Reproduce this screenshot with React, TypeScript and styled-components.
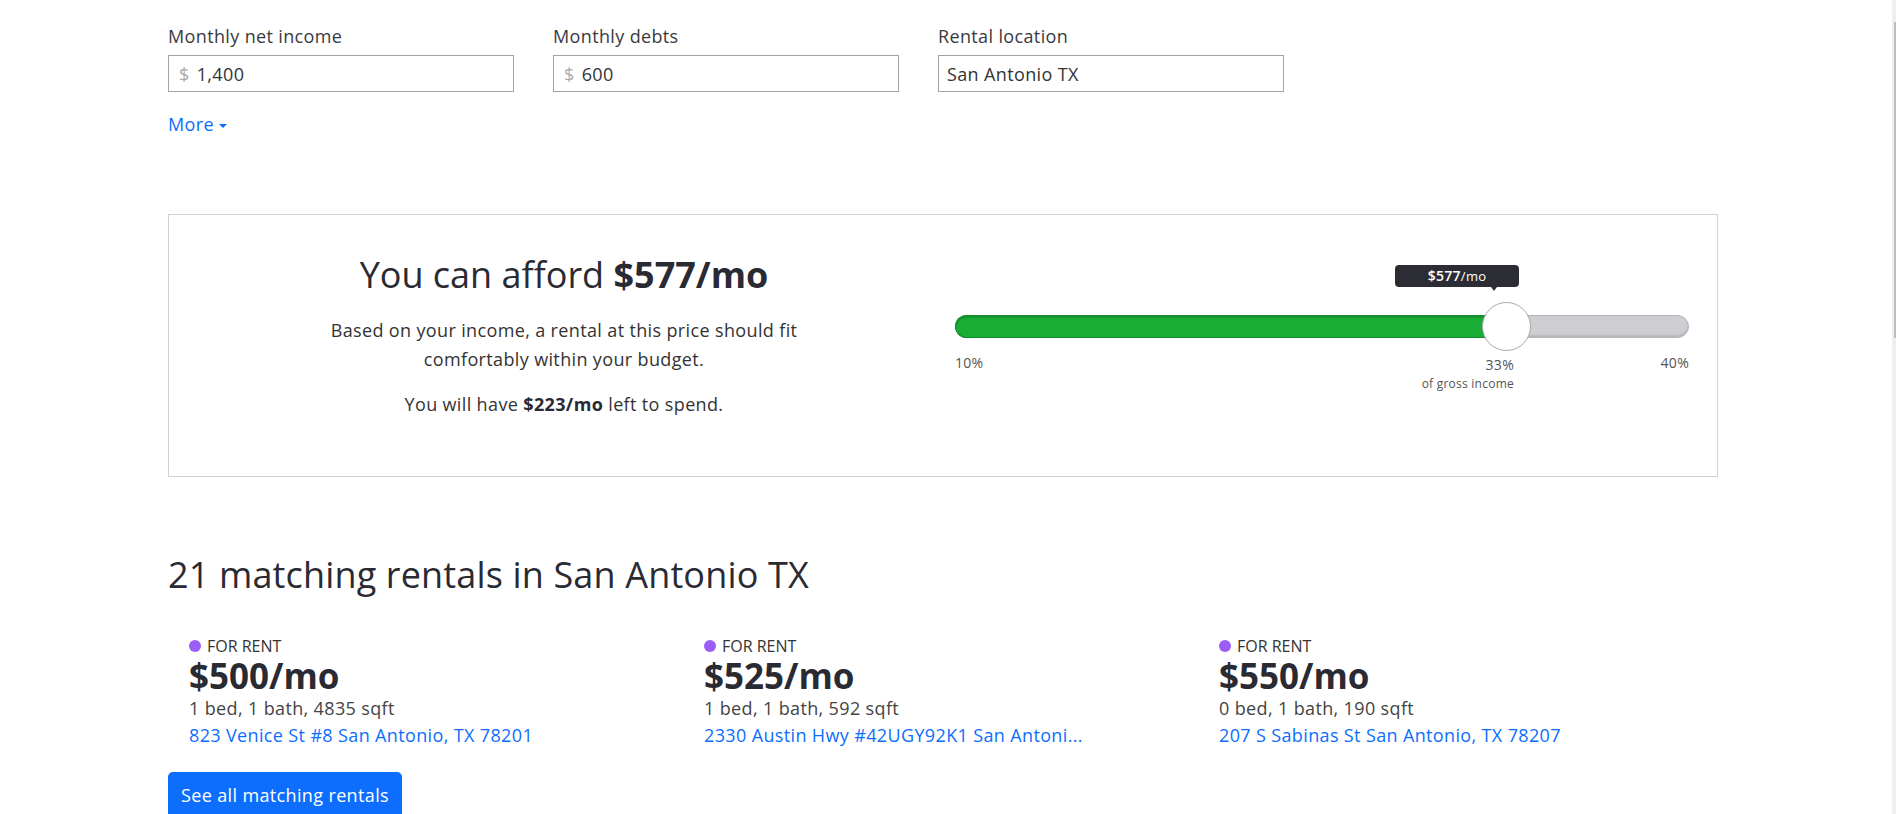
import React from 'react';
import styled, { createGlobalStyle } from 'styled-components';

const GlobalStyle = createGlobalStyle`
  html, body {
    margin: 0;
    padding: 0;
    height: 100%;
    overflow: hidden;
    background: #fff;
  }
  body {
    font-family: "Open Sans", "Noto Sans", Arial, sans-serif;
    color: #333;
  }
  * {
    box-sizing: border-box;
    letter-spacing: 0.02em;
  }
`;

const Page = styled.div`
  height: 100vh;
  overflow: hidden;
  padding: 23px 0 0 168px;
`;

const Container = styled.div`
  width: 1550px;
`;

const FieldRow = styled.div`
  display: grid;
  grid-template-columns: repeat(4, 346px);
  column-gap: 39px;
`;

const Field = styled.div`
  display: flex;
  flex-direction: column;
`;

const Label = styled.label`
  font-size: 18px;
  line-height: 27px;
  color: #3a3a3f;
  margin-bottom: 5px;
`;

const InputBox = styled.div`
  display: flex;
  align-items: center;
  height: 37px;
  border: 1px solid #a3a3a3;
  padding: 0 8px;
  background: #fff;
`;

const Prefix = styled.span`
  font-size: 18px;
  color: #aaa;
  padding-left: 2px;
  margin-right: 7px;
`;

const TextInput = styled.input`
  flex: 1;
  min-width: 0;
  border: none;
  outline: none;
  padding: 0;
  font-family: inherit;
  font-size: 18px;
  color: #333;
  background: transparent;
`;

const MoreLink = styled.a`
  display: inline-flex;
  align-items: center;
  margin-top: 19px;
  font-size: 18px;
  line-height: 27px;
  color: #0d6efd;
  text-decoration: none;
  cursor: pointer;
`;

const Caret = styled.span`
  margin-left: 5px;
  margin-top: 2px;
  border-left: 4px solid transparent;
  border-right: 4px solid transparent;
  border-top: 4px solid #0d6efd;
`;

const Card = styled.section`
  margin-top: 76px;
  border: 1px solid #d2d2d2;
  padding: 38px 28px 41px;
  display: grid;
  grid-template-columns: 1fr 1fr;
  column-gap: 24px;
`;

const Summary = styled.div`
  text-align: center;
`;

const Headline = styled.h2`
  margin: 0 0 20px;
  font-size: 36px;
  line-height: 1.2;
  font-weight: 400;
  color: #2a2a33;
  letter-spacing: 0;

  b {
    font-weight: 700;
    letter-spacing: 0;
  }
`;

const Para = styled.p`
  margin: 0 auto 16px;
  max-width: 500px;
  font-size: 18px;
  line-height: 1.6;
  color: #333;

  b {
    font-weight: 700;
    color: #2a2a33;
  }
`;

const SliderArea = styled.div`
  position: relative;
  padding-top: 62px;
`;

const Tooltip = styled.div<{ $left: number }>`
  position: absolute;
  top: 12px;
  left: ${({ $left }) => $left}px;
  width: 124px;
  height: 22px;
  border-radius: 4px;
  background: #2b2c34;
  color: #fff;
  text-align: center;
  line-height: 22px;
  font-size: 13px;

  b {
    font-size: 14px;
    font-weight: 600;
  }

  &::after {
    content: '';
    position: absolute;
    left: 96px;
    bottom: -4px;
    border-left: 3.5px solid transparent;
    border-right: 3.5px solid transparent;
    border-top: 4px solid #2b2c34;
  }
`;

const Track = styled.div`
  position: relative;
  height: 23px;
  border-radius: 12px;
  background: #cdcdd2;
  border: 1px solid #b3b3b8;
  box-shadow: inset 0 -2px 2px rgba(0, 0, 0, 0.1);
`;

const Fill = styled.div<{ $pct: number }>`
  position: absolute;
  left: -1px;
  top: -1px;
  bottom: -1px;
  width: ${({ $pct }) => $pct}%;
  background: #19ad36;
  border: 1px solid #138a2b;
  border-right: none;
  border-radius: 12px 0 0 12px;
  box-shadow: inset 0 2px 1px rgba(0, 0, 0, 0.15);
`;

const Thumb = styled.div<{ $pct: number }>`
  position: absolute;
  top: 50%;
  left: ${({ $pct }) => $pct}%;
  width: 49px;
  height: 49px;
  margin: -24.5px 0 0 -24.5px;
  border-radius: 50%;
  background: #fff;
  border: 1px solid #a8a8a8;
`;

const ScaleRow = styled.div`
  position: relative;
  display: flex;
  justify-content: space-between;
  margin-top: 14px;
  font-size: 14px;
  line-height: 21px;
  color: #555;
`;

const Marker = styled.div<{ $right: number }>`
  position: absolute;
  top: 4px;
  right: calc(100% - ${({ $right }) => $right}px);
  text-align: right;
  line-height: 18px;
`;

const MarkerNote = styled.div`
  margin-top: 2px;
  font-size: 12px;
  line-height: 16px;
  color: #555;
`;

const SectionTitle = styled.h2`
  margin: 76px 0 0;
  font-size: 36px;
  line-height: 1.2;
  font-weight: 500;
  color: #2a2a33;
  letter-spacing: 0.15px;
`;

const Listings = styled.div`
  margin-top: 39px;
  padding-left: 21px;
  display: grid;
  grid-template-columns: repeat(3, 515px);
`;

const Listing = styled.div`
  display: flex;
  flex-direction: column;
`;

const Status = styled.div`
  display: flex;
  align-items: center;
  gap: 6px;
  font-size: 16px;
  line-height: 22px;
  color: #333;
  letter-spacing: 0;
`;

const Dot = styled.span`
  width: 12px;
  height: 12px;
  border-radius: 50%;
  background: #9c5cf6;
`;

const Price = styled.div`
  font-size: 35px;
  line-height: 38px;
  font-weight: 700;
  color: #2a2a33;
  letter-spacing: 0;
`;

const Details = styled.div`
  font-size: 18px;
  line-height: 27px;
  color: #444;
`;

const Address = styled.a`
  font-size: 18px;
  line-height: 27px;
  color: #0d6efd;
  text-decoration: none;
  white-space: nowrap;
`;

const PrimaryButton = styled.button`
  margin-top: 23px;
  padding: 10px 13px;
  border: none;
  border-radius: 5px;
  background: #0d6efd;
  color: #fff;
  font-family: inherit;
  font-size: 18px;
  line-height: 27px;
  cursor: pointer;
`;

const ScrollTrack = styled.div`
  position: fixed;
  top: 0;
  right: 0;
  width: 4px;
  height: 100%;
  background: #efefef;
`;

const ScrollThumb = styled.div`
  position: absolute;
  top: 22px;
  right: 0;
  width: 2px;
  height: 316px;
  background: #bdbdbd;
`;

const listings = [
  { price: '$500/mo', details: '1 bed, 1 bath, 4835 sqft', address: '823 Venice St #8 San Antonio, TX 78201' },
  { price: '$525/mo', details: '1 bed, 1 bath, 592 sqft', address: '2330 Austin Hwy #42UGY92K1 San Antoni...' },
  { price: '$550/mo', details: '0 bed, 1 bath, 190 sqft', address: '207 S Sabinas St San Antonio, TX 78207' },
];

// thumb sits at 553px of a 735px track
const thumbPct = (553 / 735) * 100;

export default function App() {
  return (
    <Page>
      <GlobalStyle />
      <Container>
        <FieldRow>
          <Field>
            <Label>Monthly net income</Label>
            <InputBox>
              <Prefix>$</Prefix>
              <TextInput readOnly value="1,400" />
            </InputBox>
          </Field>
          <Field>
            <Label>Monthly debts</Label>
            <InputBox>
              <Prefix>$</Prefix>
              <TextInput readOnly value="600" />
            </InputBox>
          </Field>
          <Field>
            <Label>Rental location</Label>
            <InputBox>
              <TextInput readOnly value="San Antonio TX" />
            </InputBox>
          </Field>
        </FieldRow>

        <MoreLink>
          More
          <Caret />
        </MoreLink>

        <Card>
          <Summary>
            <Headline>
              You can afford <b>$577/mo</b>
            </Headline>
            <Para>
              Based on your income, a rental at this price should fit comfortably within your budget.
            </Para>
            <Para>
              You will have <b>$223/mo</b> left to spend.
            </Para>
          </Summary>

          <SliderArea>
            <Tooltip $left={440}>
              <b>$577</b>/mo
            </Tooltip>
            <Track>
              <Fill $pct={thumbPct} />
              <Thumb $pct={thumbPct} />
            </Track>
            <ScaleRow>
              <span>10%</span>
              <Marker $right={559}>
                33%
                <MarkerNote>of gross income</MarkerNote>
              </Marker>
              <span>40%</span>
            </ScaleRow>
          </SliderArea>
        </Card>

        <SectionTitle>21 matching rentals in San Antonio TX</SectionTitle>

        <Listings>
          {listings.map((l) => (
            <Listing key={l.price}>
              <Status>
                <Dot />
                FOR RENT
              </Status>
              <Price>{l.price}</Price>
              <Details>{l.details}</Details>
              <Address>{l.address}</Address>
            </Listing>
          ))}
        </Listings>

        <PrimaryButton>See all matching rentals</PrimaryButton>
      </Container>
      <ScrollTrack>
        <ScrollThumb />
      </ScrollTrack>
    </Page>
  );
}
